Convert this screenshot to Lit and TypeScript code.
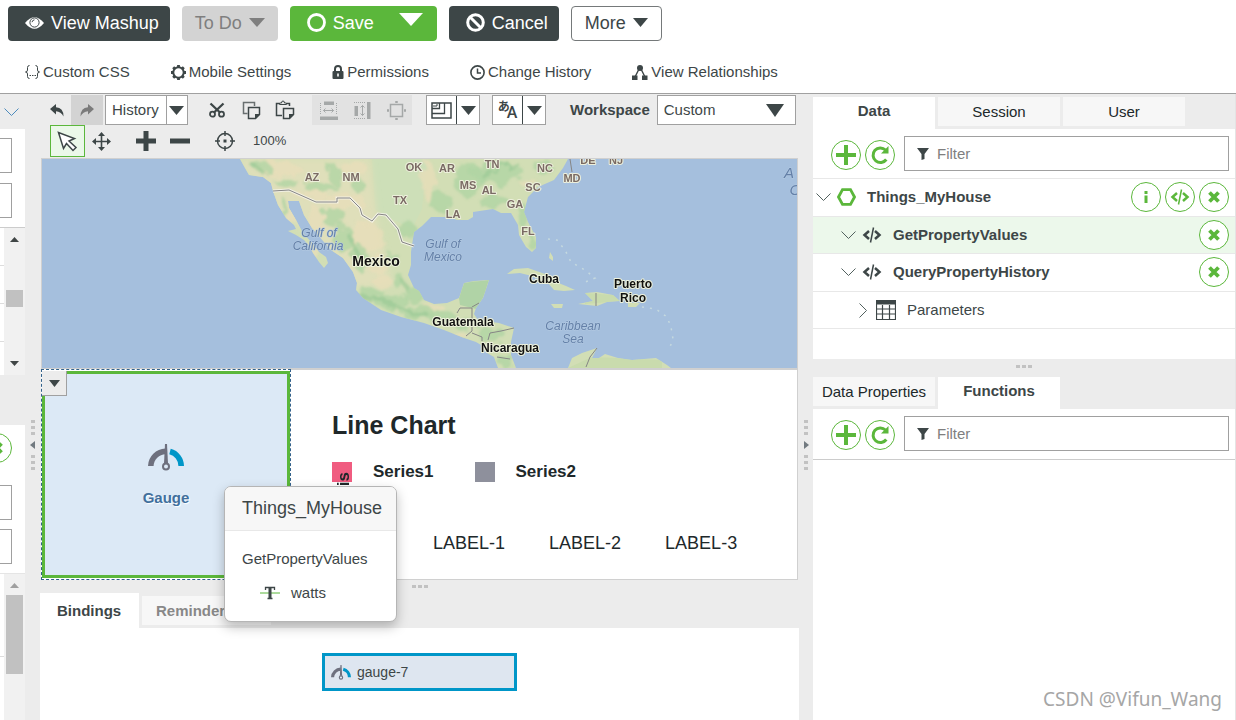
import { LitElement, html, svg, css, TemplateResult } from "lit";
import { customElement, property } from "lit/decorators.js";

const icon = (w: number, h: number, body: unknown) =>
  html`<svg class="icon" width=${w} height=${h} viewBox="0 0 ${w} ${h}" fill="none" stroke="currentColor" aria-hidden="true">${body}</svg>`;

const caret = (w: number, h: number) => icon(w, h, svg`<path d="M0 0H${w}L${w / 2} ${h}Z" fill="currentColor" stroke="none"/>`);

const icons = {
  eye: icon(19, 12, svg`<path d="M0 6Q9.500-5.500 19 6Q9.500 17.500 0 6Z" fill="currentColor" stroke="none"/><circle cx="9.500" cy="5.500" r="4.600" stroke="#3d4647" stroke-width="1"/><path d="M7 5.200Q7.300 3 9.500 2.800" stroke="#3d4647" stroke-width="1"/>`),
  ring: icon(19, 19, svg`<circle cx="9.500" cy="9.500" r="8" stroke-width="2.800"/>`),
  ban: icon(19, 19, svg`<circle cx="9.500" cy="9.500" r="7.800" stroke-width="3"/><path d="M4.500 4.500L14.500 14.500" stroke-width="3"/>`),
  braces: icon(15, 16, svg`<path d="M4.500 1.500Q2.500 1.500 2.500 3.500V6Q2.500 8 .5 8Q2.500 8 2.500 10V12.500Q2.500 14.500 4.500 14.500M10.500 1.500Q12.500 1.500 12.500 3.500V6Q12.500 8 14.500 8Q12.500 8 12.500 10V12.500Q12.500 14.500 10.500 14.500M4.500 11.500H6M7 11.500H8.500M9.500 11.500H11"/>`),
  gear: icon(15, 15, svg`<circle cx="7.500" cy="7.500" r="5.200" stroke-width="2"/><path d="M7.500 0V2.500M7.500 12.500V15M0 7.500H2.500M12.500 7.500H15M2.200 2.200L3.900 3.900M11.100 11.100L12.800 12.800M2.200 12.800L3.900 11.100M11.100 3.900L12.800 2.200" stroke-width="2.800"/>`),
  lock: icon(12, 14, svg`<rect x=".5" y="6" width="11" height="8" rx="1" fill="currentColor" stroke="none"/><path d="M3 6.500V4Q3 1 6 1Q9 1 9 4V6.500" stroke-width="2"/><path d="M6 8.500V11.500" stroke="#fff" stroke-width="1.600"/>`),
  clock: icon(15, 15, svg`<circle cx="7.500" cy="7.500" r="6.600" stroke-width="1.600"/><path d="M7.500 3.500V8H11" stroke-width="1.500"/>`),
  relations: icon(16, 15, svg`<circle cx="8" cy="3" r="3" fill="currentColor" stroke="none"/><path d="M7 4L3 12M9 4L13 12" stroke-width="1.400"/><path d="M0 10.500H5.500V15H0ZM10 10.500H15.500V15H10Z" fill="currentColor" stroke="none"/>`),
  undo: icon(14, 13, svg`<path d="M0 5L6 0V3.200Q13.500 3.500 13.500 12.500Q11 7.500 6 7.300V10.500Z" fill="currentColor" stroke="none"/>`),
  redo: icon(14, 13, svg`<path d="M14 5L8 0V3.200Q.5 3.500.5 12.500Q3 7.500 8 7.300V10.500Z" fill="currentColor" stroke="none"/>`),
  cut: icon(16, 16, svg`<circle cx="3.500" cy="12.200" r="2.500" stroke-width="1.800"/><circle cx="12.500" cy="12.200" r="2.500" stroke-width="1.800"/><path d="M1.500 1.500L11 10.500M14.500 1.500L5 10.500" stroke-width="2.300"/>`),
  copy: icon(19, 19, svg`<path d="M5.500 12.500H1.500V1.500H12.500V5" stroke-width="1.500" opacity=".75"/><path d="M6.500 6.500H17.500V13.500L13.500 17.500H6.500Z" stroke-width="1.500"/><path d="M18 13L13 18V13Z" fill="currentColor" stroke="none"/>`),
  paste: icon(20, 20, svg`<path d="M7 15.500H1.500V3.500H4M12 3.500H14.500V6" stroke-width="1.500"/><path d="M4.500 4.500V3H6.500Q6.500 1 8 1Q9.500 1 9.500 3H11.500V4.500Z"/><path d="M8.500 8.500H18.500V14.500L14.500 18.500H8.500Z" stroke-width="1.500"/><path d="M19 14L14 19V14Z" fill="currentColor" stroke="none"/>`),
  spreadH: icon(19, 19, svg`<path d="M5 .5H15V4H5ZM1 15.500H19V19H1Z" fill="currentColor" stroke="none"/><path d="M1.500 2V14M17.500 2V14" stroke-dasharray="1 1"/><path d="M4.500 9.500H14.500M6.500 7.500L4.500 9.500L6.500 11.500M12.500 7.500L14.500 9.500L12.500 11.500"/>`),
  spreadV: icon(19, 19, svg`<path d="M1.500 5H5V15H1.500ZM14 1H17.500V18H14Z" fill="currentColor" stroke="none"/><path d="M1 1.500H13M1 17.500H13" stroke-dasharray="1 1"/><path d="M9.500 4.500V14.500M7.500 6.500L9.500 4.500L11.500 6.500M7.500 12.500L9.500 14.500L11.500 12.500"/>`),
  fit: icon(19, 19, svg`<rect x="3.500" y="3.500" width="12" height="12" stroke-width="1.500"/><path d="M9.500 0V2M9.500 17V19M0 9.500H2M17 9.500H19" stroke-width="2.500"/>`),
  layout: icon(21, 17, svg`<rect x="1" y="1" width="19" height="15" stroke-width="1.500"/><path d="M1 6.500H8.500V1M1 11.500H13.500V1" stroke-width="1.300"/><path d="M2 4H6V2" stroke-width="1"/>`),
  target: icon(20, 20, svg`<circle cx="10" cy="10" r="7.500" stroke-width="1.500"/><path d="M10 0V5M10 15V20M0 10H5M15 10H20" stroke-width="1.500"/><rect x="8.500" y="8.500" width="3" height="3" fill="currentColor" stroke="none"/>`),
  pointer: icon(21, 21, svg`<path d="M1.500 1.500L6.500 17.500L9.500 12.500L16 19.500L19 16.500L12 10L17.500 7.500Z" stroke-width="1.500" fill="#fff"/>`),
  move: icon(19, 19, svg`<path d="M9.500 2V17M2 9.500H17" stroke-width="1.600"/><path d="M9.500 0L13 4H6ZM9.500 19L13 15H6ZM0 9.500L4 6V13ZM19 9.500L15 6V13Z" fill="currentColor" stroke="none"/>`),
  plus: icon(20, 20, svg`<path d="M10 0V20M0 10H20" stroke-width="5"/>`),
  minus: icon(20, 20, svg`<path d="M0 10H20" stroke-width="5"/>`),
  add: icon(20, 20, svg`<path d="M10 0V20M0 10H20" stroke-width="4"/>`),
  refresh: icon(20, 20, svg`<path d="M16.300 14.500A7.300 7.300 0 1 1 15.500 5" stroke-width="3"/><path d="M18.500 1V8.500H11Z" fill="currentColor" stroke="none"/>`),
  close: icon(14, 14, svg`<path d="M2.500 2.500L11.500 11.500M11.500 2.500L2.500 11.500" stroke-width="3.800"/>`),
  info: icon(14, 14, svg`<path d="M7 1V4M7 5.500V13" stroke-width="3"/>`),
  code: icon(20, 16, svg`<path d="M7 4L2.500 8L7 12M13 4L17.500 8L13 12" stroke-width="2.500"/><path d="M11.500.5L8.500 15.500" stroke-width="1.500"/>`),
  hexagon: icon(19, 18, svg`<path d="M5.500 1.700H13.500L17.500 9L13.500 16.300H5.500L1.500 9Z" stroke-width="2.800"/>`),
  funnel: icon(12, 12, svg`<path d="M0 0H12L7.500 6V11L4.500 12V6Z" fill="currentColor" stroke="none"/>`),
  down: icon(15, 8, svg`<path d="M.5.500L7.500 7.500L14.500.500"/>`),
  right: icon(8, 15, svg`<path d="M.5.500L7.500 7.500L.5 14.500"/>`),
  table: icon(20, 20, svg`<path d="M0 0H20V4.500H0Z" fill="currentColor" stroke="none"/><path d="M.5 4V19.500H19.500V4M6.500 5V19M13.500 5V19M1 9H19M1 14H19" stroke-width="1.200"/>`),
  textType: icon(20, 14, svg`<path d="M0 7H20" stroke="#5bb73b"/><path d="M5.500 4V1.500H14.500V4M10 2V12.500M7.500 12.500H12.500" stroke-width="1.300"/><path d="M10 1.500V12" stroke-width="3"/>`),
};

const gauge = (w: number, h: number) => html`<svg class="icon" width=${w} height=${h} viewBox="0 0 36 27" fill="none" aria-hidden="true">
  <path d="M2.800 22A15.200 15.200 0 0 1 17.500 7.400" stroke="#6e707e" stroke-width="5.600"/>
  <path d="M22 7.500A15 15 0 0 1 33.200 22" stroke="#0096c8" stroke-width="5.600"/>
  <circle cx="18" cy="22.500" r="3" fill="#dce9f6" stroke="#6e707e" stroke-width="2"/><path d="M17 0H19L20 19.500H16Z" fill="#6e707e"/></svg>`;

@customElement("terrain-map")
class TerrainMap extends LitElement {
  static styles = css`
    :host { display: block; height: 209px; background: #a5bfdd; overflow: hidden; }
    .map { display: block; width: 100%; height: 100%; font-family: "Liberation Sans", Arial, sans-serif; text-anchor: middle; }
    .state, .country, .sea { paint-order: stroke; stroke-linejoin: round; }
    .state { font-size: 11px; font-weight: bold; fill: #7a6a64; stroke: #edf0dc; stroke-width: 2px; }
    .country { font-size: 12px; font-weight: bold; fill: #111; stroke: #eef2dc; stroke-width: 2px; }
    .sea { font-size: 12px; font-style: italic; fill: #6480a8; stroke: #b4cae2; stroke-width: 1px; }
    .big { font-size: 14px; }
    .ocean { font-size: 15px; }
  `;
  private states: [string, number, number][] = [
    ["AZ", 270, 22], ["NM", 309, 22], ["TX", 358, 45], ["OK", 372, 12], ["AR", 405, 13], ["TN", 450, 9], ["NC", 503, 13],
    ["MD", 530, 23], ["DE", 546, 5], ["NJ", 574, 5], ["MS", 426, 30], ["AL", 447, 35], ["SC", 491, 32], ["GA", 473, 49], ["LA", 411, 59], ["FL", 486, 76],
  ];
  private countries: [string, number, number][] = [["Cuba", 502, 124], ["Puerto", 591, 129], ["Rico", 591, 143], ["Guatemala", 421, 167], ["Nicaragua", 468, 193]];
  private seas: [string, number, number][] = [["Gulf of", 277, 78], ["California", 276, 91], ["Gulf of", 401, 89], ["Mexico", 401, 102], ["Caribbean", 531, 171], ["Sea", 531, 184]];
  private forests = [
    [220, 8, 9, 5], [245, 24, 12, 3], [278, 28, 16, 4], [293, 16, 7, 10], [316, 26, 6, 7], [241, 48, 3, 10], [292, 58, 12, 10], [302, 80, 9, 15],
    [318, 99, 7, 13], [350, 98, 8, 4], [357, 122, 5, 8], [330, 134, 12, 5], [350, 143, 18, 6], [372, 136, 10, 8], [375, 153, 17, 6],
    [400, 158, 14, 6], [425, 164, 15, 5], [450, 176, 14, 7], [399, 43, 12, 10], [426, 20, 14, 18], [455, 14, 28, 10], [452, 43, 16, 6],
    [483, 59, 6, 12], [490, 82, 4, 9], [502, 8, 10, 6], [432, 132, 13, 10], [464, 202, 8, 7], [365, 70, 8, 9],
  ];
  private deserts = [
    [239, 10, 20, 8], [268, 36, 18, 5], [312, 10, 14, 7], [304, 42, 20, 8], [324, 78, 18, 14], [337, 105, 12, 10], [340, 122, 10, 6],
    [274, 60, 7, 12], [250, 60, 4, 14], [270, 92, 5, 10], [391, 149, 13, 3], [416, 176, 10, 3], [487, 24, 9, 3], [386, 22, 7, 20],
  ];
  render() {
    return html`<svg class="map" viewBox="0 0 756 209" preserveAspectRatio="xMinYMin slice" role="img" aria-label="Map">
      <defs>
        <filter id="soft" x="-20%" y="-20%" width="140%" height="140%"><feGaussianBlur stdDeviation="3"/></filter>
        <filter id="rough" x="-10%" y="-10%" width="120%" height="120%"><feTurbulence type="fractalNoise" baseFrequency=".09" numOctaves="3" seed="4"/><feDisplacementMap in="SourceGraphic" scale="15" result="d"/><feGaussianBlur stdDeviation=".8"/></filter>
        <clipPath id="land">
          <path d="M198 0L203 9L207 16L221 18L229 24L231 32L236 46L244 59L252 66L254 70L246 72L254 76L262 81L268 88L271 94L277 103L282 109L286 104L284 98L277 93L271 85L261 74L254 61L247 49L246 42L257 42L262 56L270 69L276 76L289 91L301 99L311 113L315 124L314 131L321 139L339 151L359 158L382 164L402 171L422 179L434 183L439 186L445 194L452 198L456 209H474L469 196V183L472 169L457 164L436 161L432 155L434 149L441 139L447 121L432 122L422 124L417 139L405 144L392 145L382 141L377 132L372 129L366 116L369 106V93L372 73L380 67L389 58L406 58L415 61L426 61L431 58L431 53L451 50L459 54L469 54L476 66L477 76L484 88L490 93L494 89L494 78L486 63L482 53L486 38L496 28L512 21L521 9L526 0Z"/>
          <path d="M465 115L472 110L486 109L503 115L514 123L524 127L533 131L522 132L512 131L506 124L490 117L478 114Z"/>
          <path d="M543 134L555 133L571 136L578 142L565 143L555 147L536 145L551 142ZM509 145L521 145L520 149L512 149ZM586 144H598L594 148H586ZM508 93L511 98L511 102L507 99Z"/>
          <path d="M526 209L530 199L540 194L546 192L555 189L550 199L557 199L563 195L576 199L590 201L614 199L625 206L629 209Z"/>
        </clipPath>
      </defs>
      <g clip-path="url(#land)">
        <rect width="756" height="209" fill="#d2deb5"/>
        <path d="M330 0H385L380 50L370 70L350 60L333 50Z" fill="#cddfb8"/>
        <path d="M195 0H328L335 60L350 125L315 130L270 75L230 50Z" fill="#dfdfba" filter="url(#soft)"/>
        <g filter="url(#rough)">
          ${this.deserts.map(([x, y, rx, ry]) => svg`<ellipse cx=${x} cy=${y} rx=${rx} ry=${ry} fill="#e8ddb9" opacity=".75"/>`)}
          ${this.forests.map(([x, y, rx, ry]) => svg`<ellipse cx=${x} cy=${y} rx=${rx} ry=${ry} fill="#b0d4a4" opacity=".8"/>`)}
          <path d="M312 136Q335 139 350 146T388 158M302 70L320 100M360 120L367 132M208 4L224 16M440 18L475 3" stroke="#98c894" stroke-width="4" fill="none" opacity=".65"/>
        </g>
        <path d="M417 139L422 124L447 121L441 139L434 150L418 146Z" fill="#b0d3a6"/>
        <path d="M543 134L571 136L578 142L543 145ZM526 209L550 198L620 201V209Z" fill="#c5daaa" opacity=".7"/>
      </g>
      <g fill="none" stroke="#f6f5ed" stroke-width="3" opacity=".8"><path d="M231 32L247 31L274 43H295V39H308L318 49L320 56L330 62L336 55L344 56L356 70L360 83L372 87"/></g>
      <g fill="none" stroke="#858585" stroke-width="1">
        <path d="M231 32L247 31L274 43H295V39H308L318 49L320 56L330 62L336 55L344 56L356 70L360 83L372 87"/>
        <path d="M415 154L418 149H430V160M430 148L437 144M430 160V172L424 177M430 174L440 178V182M446 181L448 174L459 172L472 169M455 198L468 200M554 134V147M544 208L548 198L555 189M528 0L530 13"/>
      </g>
      <g fill="none" stroke="#c5d9df" stroke-width="1.500" stroke-dasharray="2 6"><path d="M506 80L515 81L523 91L529 103L543 111L553 119L541 124M600 148L614 150L625 158L629 168L631 180L628 188"/></g>
      ${this.states.map(([t, x, y]) => svg`<text class="state" x=${x} y=${y}>${t}</text>`)}
      ${this.seas.map(([t, x, y]) => svg`<text class="sea" x=${x} y=${y}>${t}</text>`)}
      <text class="sea ocean" x="747" y="19">A</text><text class="sea ocean" x="753" y="36">C</text>
      <text class="country big" x="334" y="107">Mexico</text>
      ${this.countries.map(([t, x, y]) => svg`<text class="country" x=${x} y=${y}>${t}</text>`)}
    </svg>`;
  }
}

@customElement("panel-splitter")
class PanelSplitter extends LitElement {
  @property() arrow = "left";
  static styles = css`
    :host { display: flex; flex-direction: column; align-items: center; gap: 6px; padding-top: 326px; color: #727a80; }
    .dots { display: grid; gap: 3px; }
    .dot { width: 4px; height: 3px; background: #c2c2c2; }
    .icon { display: block; }
  `;
  render() {
    const dots = html`<div class="dots">${[0, 1, 2].map(() => html`<span class="dot"></span>`)}</div>`;
    return html`${dots}${icon(5, 8, svg`<path d=${this.arrow === "left" ? "M5 0V8L0 4Z" : "M0 0V8L5 4Z"} fill="currentColor" stroke="none"/>`)}${dots}`;
  }
}

@customElement("app-root")
class AppRoot extends LitElement {
  static styles = css`
    :host {
      display: flex; flex-direction: column; height: 100vh; overflow: hidden; position: relative; box-sizing: border-box;
      font: 15px/20px "Liberation Sans", Arial, sans-serif; color: #3d4647; background: #fff;
    }
    *, *::before { box-sizing: border-box; }
    button, input, select { font: inherit; color: inherit; margin: 0; padding: 0; border-radius: 0; background: none; border: 0; }
    .icon { display: block; flex: none; }

    .header { height: 94px; flex: none; border-bottom: 1px solid #a0a0a0; }
    .actions { display: flex; gap: 12px; padding: 6px 8px 0; }
    .btn { display: flex; align-items: center; justify-content: center; gap: 7px; height: 35px; padding: 0 13px; border-radius: 4px; font-size: 18px; line-height: 24px; white-space: nowrap; padding-bottom: 2px; }
    .btn.dark { padding-left: 17px; padding-right: 11px; background: #3d4647; color: #fff; }
    .btn.muted { background: #d3d3d3; color: #7f7f7f; }
    .btn.outline { border: 1px solid #75797a; }
    .split { display: flex; }
    .split .btn { background: #5bb73b; color: #fff; }
    .split .save { padding-left: 17px; padding-right: 11px; border-radius: 4px 0 0 4px; }
    .split .drop { width: 52px; align-items: flex-start; padding: 7px 0 0; border-radius: 0 4px 4px 0; }
    .links { display: flex; gap: 41px; padding: 21px 25px 0; }
    .link { display: flex; align-items: center; gap: 3px; color: inherit; text-decoration: none; white-space: nowrap; }

    .body { flex: 1; min-height: 0; display: grid; grid-template-columns: 25px 15px minmax(0, 1fr) 14px minmax(0, 423px); background: #ececec; }

    .left { display: flex; flex-direction: column; overflow: hidden; }
    .toggle { display: flex; flex: none; height: 35px; padding: 14px 0 0 4px; color: #4d8bbd; }
    .card { display: flex; flex-direction: column; align-items: flex-end; flex: none; padding: 9px 13px 9px 0; gap: 10px; background: #fff; border-bottom: 1px solid #ccc; }
    .card .field { flex: none; width: 180px; height: 35px; border: 1px solid #a0a0a0; background: #fff; }
    .card.second { margin-top: 50px; padding-top: 8px; gap: 9px; border-color: #e5e5e5; }
    .card.second .round { margin-bottom: 13px; }
    .scroll { display: grid; grid-template-columns: 4px 21px; height: 147px; flex: none; }
    .scroll.tall { height: auto; flex: 1; }
    .rows { background: #fff; }
    .cell { height: 38px; border-bottom: 1px solid #ddd; }
    .tall .cell { height: 83px; }
    .bar { display: flex; flex-direction: column; align-items: center; background: #f1f1f1; color: #404646; padding: 9px 0; }
    .bar .thumb { width: 17px; height: 17px; margin: 48px 0 auto; background: #c1c1c1; }
    .tall .bar { color: #a0a0a0; }
    .tall .thumb { height: 79px; margin-top: 7px; }

    .centre { display: flex; flex-direction: column; position: relative; min-width: 0; }
    .tools { display: flex; align-items: center; height: 31px; padding: 1px 2px 0; flex: none; }
    .tool { display: grid; place-items: center; height: 30px; width: 32px; flex: none; }
    .tool.undo { width: 29px; }
    .tool.disabled { background: #d3d3d3; color: #7b7b7b; }
    .pick { display: grid; grid-template-columns: 1fr 21px; align-items: center; height: 30px; border: 1px solid #a0a0a0; background: #fff; flex: none; }
    .pick select { grid-area: 1 / 1 / 2 / 3; appearance: none; height: 28px; width: 100%; padding-left: 6px; outline: 0; }
    .pick .icon { grid-area: 1 / 2; justify-self: center; pointer-events: none; }
    .pick.history { width: 83px; margin-left: 2px; }
    .pick.history .edge { grid-area: 1 / 2; height: 28px; border-left: 1px solid #a0a0a0; pointer-events: none; }
    .pick.space { width: 139px; margin-left: 7px; grid-template-columns: 1fr 40px; }
    .clip { display: flex; gap: 17px; align-items: center; padding: 0 21px; }
    .clip .tool { width: 16px; }
    .arrange { display: flex; gap: 2px; background: #e2e2e2; color: #a5a8a8; margin-right: 14px; }
    .combo { display: flex; width: 54px; height: 30px; margin-right: 12px; background: #fff; border: 1px solid #a0a0a0; flex: none; }
    .combo .main { display: grid; place-items: center; width: 30px; border-right: 1px solid #3d4647; }
    .combo .more { display: grid; place-items: center; flex: 1; }
    .lang { display: flex; align-items: flex-start; height: 24px; font: bold 12px/16px "Noto Sans CJK JP", sans-serif; }
    .lang .latin { margin-left: -3px; font: 500 16px/30px Roboto, sans-serif; }
    .label { font-weight: bold; margin-left: 12px; }
    .tools.second { height: 33px; padding: 0 10px 1px; }
    .tool.on { width: 35px; height: 32px; background: #ebf8e9; border: 1px solid #5bb73b; }
    .zoom { font-size: 13px; margin-left: 12px; }
    .group { display: flex; margin: 0 12px; }
    .group .tool { width: 34px; }

    .canvas { display: grid; grid-template-columns: 250px minmax(0, 1fr); grid-template-rows: 211px 211px; margin: 0 1px; flex: none; background: #fff; }
    .mapcell { grid-column: 1 / 3; border: 1px solid #d0d0d0; }
    .gaugecell { position: relative; padding: 1px 0; border: 1px dashed #33628b; }
    .gaugebox { display: flex; flex-direction: column; align-items: center; justify-content: center; height: 207px; border: 3px solid #5bb73b; background: #dce9f6; color: #416f9d; font-weight: bold; gap: 17px; text-shadow: 1px 1px 1px #fff; padding-top: 2px; }
    .menu { position: absolute; top: 1px; left: 0; display: grid; place-items: center; width: 25px; height: 25px; background: #ececec; border: solid #a0a0a0; border-width: 0 1px 1px 0; color: #3d4647; }
    .chart { border: solid #d0d0d0; border-width: 1px 1px 1px 0; padding: 39px 41px 0; color: #20282a; font-size: 18px; }
    .title { margin: 0; font-size: 25px; line-height: 32px; }
    .legend { display: flex; align-items: flex-start; gap: 41px; margin-top: 21px; font-size: 17px; font-weight: bold; }
    .series { display: flex; gap: 21px; align-items: center; height: 20px; }
    .swatch { display: flex; justify-content: center; width: 20px; height: 20px; background: #8e909c; }
    .swatch.pink { background: #f05c80; }
    .axis { writing-mode: vertical-rl; transform: rotate(180deg); height: 66px; display: flex; justify-content: flex-end; margin: 10px -4px 0 0; }
    .ticks { display: flex; gap: 44px; margin: 51px 0 0 101px; white-space: nowrap; }

    .grip { display: flex; justify-content: center; gap: 2px; flex: none; }
    .grip .dot { width: 4px; height: 3px; background: #c2c2c2; }
    .grip.mid { height: 13px; padding-top: 5px; }
    .grip.side { height: 18px; padding-top: 6px; }
    .tabs { display: flex; gap: 3px; flex: none; }
    .tab { width: 122px; height: 29px; background: #f7f7f7; color: #20282a; white-space: nowrap; }
    .tab.active { height: 32px; padding-bottom: 4px; background: #fff; color: #3d4647; font-weight: bold; }
    .bottom .tab { width: 129px; margin-top: 3px; color: #888; font-weight: bold; text-align: left; padding-left: 14px; }
    .bottom .tab.active { width: 99px; height: 35px; margin: 0; padding: 0 0 0 17px; color: #3d4647; }
    .bindings { flex: 1; display: flex; justify-content: center; align-items: flex-start; padding-top: 25px; background: #fff; }
    .node { display: flex; align-items: center; gap: 6px; width: 195px; height: 38px; padding-left: 6px; border: 3px solid #0096c8; background: #dee6f0; font-size: 14px; }

    .popup { position: absolute; left: 184px; top: 392px; z-index: 2; width: 173px; height: 136px; border: 1px solid #b5b5b5; border-radius: 7px; background: #fff; box-shadow: 0 5px 12px rgba(0, 0, 0, .25); overflow: hidden; }
    .popup .head { margin: 0; height: 44px; padding: 10px 17px; font-size: 18px; line-height: 22px; font-weight: normal; background: #f7f7f7; border-bottom: 1px solid #e8e8e8; }
    .popup .service { padding: 18px 17px 14px; }
    .popup .prop { display: flex; gap: 11px; align-items: center; padding-left: 35px; }

    .right { display: flex; flex-direction: column; min-width: 0; border-right: 1px solid #e4e4e4; }
    .right .tabs { height: 32px; }
    .right .tabs.top { margin-top: 3px; }
    .panel { background: #fff; flex: none; }
    .panel.data { height: 230px; }
    .panel.functions { flex: 1; }
    .search { display: flex; gap: 4px; padding: 7px 6px 7px 18px; border-bottom: 1px solid #e8e8e8; }
    .functions .search { padding-bottom: 8px; border-color: #ccc; }
    .search .round { margin-top: 4px; }
    .filter { display: flex; align-items: center; gap: 8px; flex: 1; height: 35px; margin-left: 5px; padding-left: 12px; border: 1px solid #a0a0a0; }
    .filter input { flex: 1; min-width: 0; height: 33px; outline: 0; }
    .filter input::placeholder { color: #7f7f7f; opacity: 1; }
    .round { display: grid; place-items: center; flex: none; width: 30px; height: 30px; border: 1px solid #5bb73b; border-radius: 50%; background: #fff; color: #5bb73b; }
    .tree { margin: 0; padding: 0; list-style: none; }
    .node-row { display: flex; align-items: center; height: 38px; padding: 0 6px 2px 3px; border-bottom: 1px solid #e8e8e8; font-weight: bold; }
    .node-row:nth-child(even) { height: 37px; padding-bottom: 0; }
    .node-row.selected { background: #ecf8eb; }
    .node-row.d1 { padding-left: 28px; }
    .node-row.d2 { padding-left: 46px; font-weight: normal; }
    .node-row .name { flex: 1; margin-left: 11px; }
    .node-row .kind { margin-left: 6px; }
    .node-row.d2 .kind { margin-left: 9px; }
    .twisty { color: #52615e; }
    .ops { display: flex; gap: 4px; }
    .hex { color: #5bb73b; }

    .watermark { position: absolute; right: 14px; bottom: 8px; z-index: 3; font: 19px/26px "Noto Sans", "Open Sans", sans-serif; color: #a6a6a6; text-shadow: 1px 1px 0 #fff; }
  `;

  private search(id: string) {
    return html`<div class="search">
      <button class="round" aria-label="Add">${icons.add}</button>
      <button class="round" aria-label="Refresh">${icons.refresh}</button>
      <label class="filter" for=${id}>${icons.funnel}<input id=${id} placeholder="Filter" aria-label="Filter" /></label>
    </div>`;
  }

  private row(depth: number, arrow: TemplateResult, kind: TemplateResult, name: string, ops: [string, TemplateResult][], cls = "") {
    return html`<li class="node-row d${depth} ${cls}">
      <span class="twisty">${arrow}</span><span class="kind">${kind}</span><span class="name">${name}</span>
      <span class="ops">${ops.map(([label, glyph]) => html`<button class="round" aria-label=${label}>${glyph}</button>`)}</span>
    </li>`;
  }

  private link(glyph: TemplateResult, text: string) {
    return html`<a class="link" href="#">${glyph}<span>${text}</span></a>`;
  }

  render() {
    const up = icon(9, 5, svg`<path d="M0 5H9L4.500 0Z" fill="currentColor" stroke="none"/>`);
    const grip = [0, 1, 2].map(() => html`<span class="dot"></span>`);
    const remove: [string, TemplateResult] = ["Remove", icons.close];
    return html`
      <header class="header">
        <div class="actions">
          <button class="btn dark">${icons.eye}<span>View Mashup</span></button>
          <button class="btn muted"><span>To Do</span>${caret(16, 9)}</button>
          <div class="split">
            <button class="btn save">${icons.ring}<span>Save</span></button>
            <button class="btn drop" aria-label="Save options">${caret(24, 13)}</button>
          </div>
          <button class="btn dark">${icons.ban}<span>Cancel</span></button>
          <button class="btn outline"><span>More</span>${caret(15, 9)}</button>
        </div>
        <nav class="links">
          ${this.link(icons.braces, "Custom CSS")}${this.link(icons.gear, "Mobile Settings")}${this.link(icons.lock, "Permissions")}
          ${this.link(icons.clock, "Change History")}${this.link(icons.relations, "View Relationships")}
        </nav>
      </header>
      <main class="body">
        <aside class="left">
          <button class="toggle" aria-label="Collapse">${icons.down}</button>
          <div class="card"><input class="field" aria-label="Widget filter" /><input class="field" aria-label="Widget category" /></div>
          <div class="scroll"><div class="rows"><div class="cell"></div><div class="cell"></div><div class="cell"></div></div>
            <div class="bar">${up}<span class="thumb"></span>${caret(9, 5)}</div></div>
          <div class="card second"><button class="round" aria-label="Remove">${icons.close}</button><input class="field" aria-label="Property" /><input class="field" aria-label="Value" /></div>
          <div class="scroll tall"><div class="rows"><div class="cell"></div></div><div class="bar">${up}<span class="thumb"></span></div></div>
        </aside>
        <panel-splitter arrow="left"></panel-splitter>
        <section class="centre">
          <div class="tools">
            <button class="tool undo" aria-label="Undo">${icons.undo}</button>
            <button class="tool disabled" aria-label="Redo">${icons.redo}</button>
            <div class="pick history"><select aria-label="History"><option>History</option></select><span class="edge"></span>${caret(15, 9)}</div>
            <div class="clip">
              <button class="tool" aria-label="Cut">${icons.cut}</button><button class="tool" aria-label="Copy">${icons.copy}</button><button class="tool" aria-label="Paste">${icons.paste}</button>
            </div>
            <div class="arrange">
              <button class="tool" aria-label="Space horizontally">${icons.spreadH}</button><button class="tool" aria-label="Space vertically">${icons.spreadV}</button><button class="tool" aria-label="Fit">${icons.fit}</button>
            </div>
            <div class="combo"><button class="main" aria-label="Layout">${icons.layout}</button><button class="more" aria-label="Layout options">${caret(15, 9)}</button></div>
            <div class="combo"><button class="main"><span class="lang">あ<span class="latin">A</span></span></button><button class="more" aria-label="Language options">${caret(15, 9)}</button></div>
            <label class="label" for="space">Workspace</label>
            <div class="pick space"><select id="space"><option>Custom</option></select>${caret(18, 13)}</div>
          </div>
          <div class="tools second">
            <button class="tool on" aria-label="Select">${icons.pointer}</button>
            <button class="tool" aria-label="Move">${icons.move}</button>
            <div class="group"><button class="tool" aria-label="Zoom in">${icons.plus}</button><button class="tool" aria-label="Zoom out">${icons.minus}</button></div>
            <button class="tool" aria-label="Centre view">${icons.target}</button>
            <span class="zoom">100%</span>
          </div>
          <div class="canvas">
            <div class="mapcell"><terrain-map></terrain-map></div>
            <div class="gaugecell">
              <div class="gaugebox">${gauge(36, 27)}<span>Gauge</span></div>
              <button class="menu" aria-label="Widget menu">${caret(11, 7)}</button>
            </div>
            <div class="chart">
              <h2 class="title">Line Chart</h2>
              <div class="legend">
                <div class="series"><span class="swatch pink"><span class="axis">Y-Axis</span></span><span>Series1</span></div>
                <div class="series"><span class="swatch"></span><span>Series2</span></div>
              </div>
              <div class="ticks"><span>LABEL-1</span><span>LABEL-2</span><span>LABEL-3</span></div>
            </div>
          </div>
          <div class="grip mid">${grip}</div>
          <div class="tabs bottom" role="tablist"><button class="tab active" role="tab">Bindings</button><button class="tab" role="tab">Reminders</button></div>
          <div class="bindings"><div class="node">${gauge(20, 15)}<span>gauge-7</span></div></div>
          <div class="popup">
            <h3 class="head">Things_MyHouse</h3>
            <div class="service">GetPropertyValues</div>
            <div class="prop">${icons.textType}<span>watts</span></div>
          </div>
        </section>
        <panel-splitter arrow="right"></panel-splitter>
        <section class="right">
          <div class="tabs top" role="tablist"><button class="tab active" role="tab">Data</button><button class="tab" role="tab">Session</button><button class="tab" role="tab">User</button></div>
          <div class="panel data">
            ${this.search("data-filter")}
            <ul class="tree">
              ${this.row(0, icons.down, html`<span class="hex">${icons.hexagon}</span>`, "Things_MyHouse", [["Info", icons.info], ["Services", icons.code], remove])}
              ${this.row(1, icons.down, icons.code, "GetPropertyValues", [remove], "selected")}
              ${this.row(1, icons.down, icons.code, "QueryPropertyHistory", [remove])}
              ${this.row(2, icons.right, icons.table, "Parameters", [])}
            </ul>
          </div>
          <div class="grip side">${grip}</div>
          <div class="tabs" role="tablist"><button class="tab" role="tab">Data Properties</button><button class="tab active" role="tab">Functions</button></div>
          <div class="panel functions">${this.search("function-filter")}</div>
        </section>
      </main>
      <div class="watermark">CSDN @Vifun_Wang</div>
    `;
  }
}
